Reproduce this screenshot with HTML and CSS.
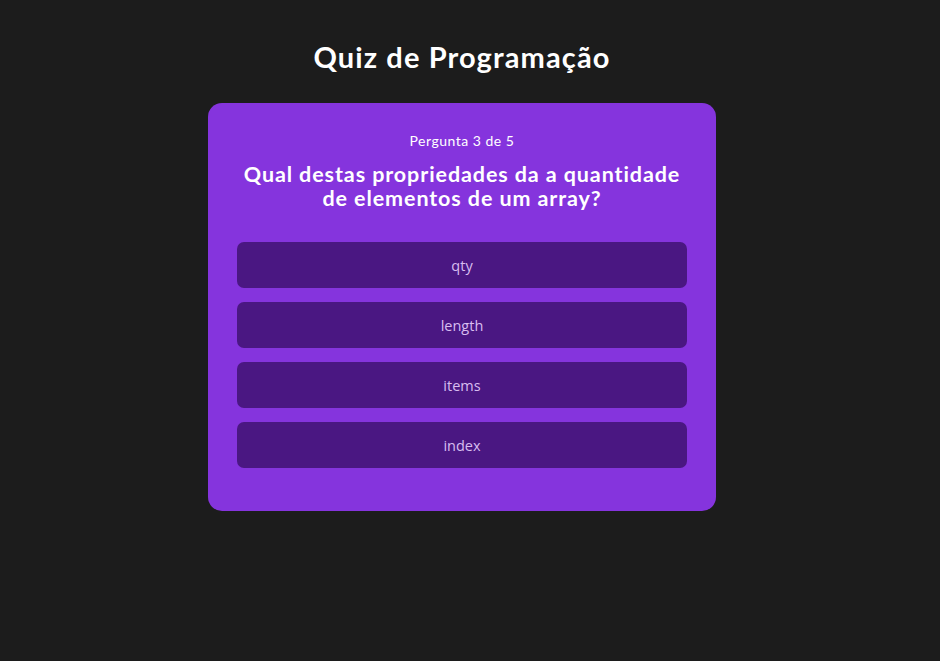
FILE: index.html
```html
<!DOCTYPE html>
<html lang="pt">
<head>
<meta charset="utf-8">
<title>Quiz de Programação</title>
<link rel="stylesheet" href="styles.css">
</head>
<body>
<main class="app">
  <h1 class="title">Quiz de Programação</h1>
  <section class="card">
    <p class="counter">Pergunta 3 de 5</p>
    <h2 class="question">Qual destas propriedades da a quantidade de elementos de um array?</h2>
    <div class="options">
      <button class="option">qty</button>
      <button class="option">length</button>
      <button class="option">items</button>
      <button class="option">index</button>
    </div>
  </section>
</main>
</body>
</html>
```
FILE: styles.css
```css
html, body {
  margin: 0;
  padding: 0;
  background: #1c1c1c;
  color: #ffffff;
  font-family: "Lato", "Open Sans", sans-serif;
}
.app {
  display: flex;
  flex-direction: column;
  align-items: center;
  padding: 38px 16px 0 0;
}
.title {
  margin: 0;
  font-size: 29px;
  font-weight: 700;
  line-height: 38px;
  letter-spacing: 1.1px;
}
.card {
  box-sizing: border-box;
  width: 508px;
  margin-top: 27px;
  background: #8534dd;
  border-radius: 14px;
  padding: 29px 29px 43px;
  text-align: center;
}
.counter {
  margin: 0;
  font-size: 14px;
  line-height: 18px;
  letter-spacing: 0.5px;
}
.question {
  margin: 12px 0 0;
  font-size: 21.5px;
  font-weight: 700;
  line-height: 24px;
  letter-spacing: 0.9px;
}
.options {
  display: flex;
  flex-direction: column;
  gap: 14px;
  margin-top: 32px;
}
.option {
  height: 46px;
  border: none;
  border-radius: 7px;
  background: #4a1782;
  color: #d8bdf0;
  font-family: "Open Sans", "Lato", sans-serif;
  font-size: 14.5px;
  cursor: pointer;
}
```
